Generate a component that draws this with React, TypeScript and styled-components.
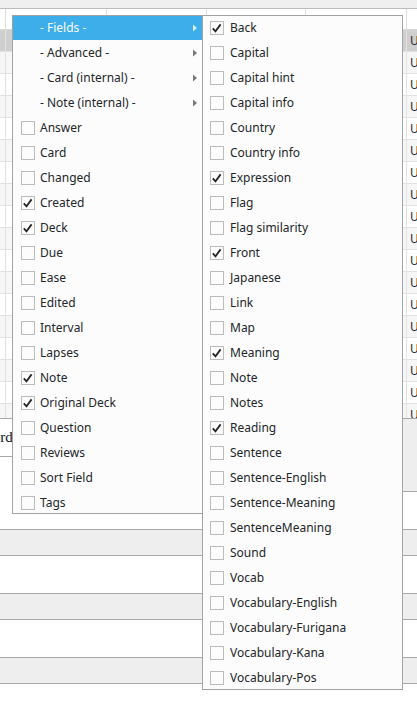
import React from "react";
import styled, { createGlobalStyle } from "styled-components";

const GlobalStyle = createGlobalStyle`
  html, body { margin: 0; padding: 0; background: #ffffff; }
  body {
    font-family: "Noto Sans", "Open Sans", sans-serif;
    font-size: 12px;
    color: #232629;
  }
  #root { width: 417px; height: 715px; }
`;

const Page = styled.div`
  position: relative;
  width: 417px;
  height: 715px;
  overflow: hidden;
  background: #ffffff;
`;

const TopStrip = styled.div`
  height: 8px;
  background: #efefef;
  border-bottom: 1px solid #bcbcbc;
`;

const Table = styled.div`
  height: 409px;
  overflow: hidden;
  display: flex;
  flex-direction: column;
`;

const HeaderRow = styled.div`
  display: flex;
  flex: none;
  height: 20px;
  border-bottom: 1px solid #d9d9d9;
  background: #ffffff;
`;

const HeaderCell = styled.div<{ $w: number }>`
  flex: none;
  width: ${(p) => p.$w}px;
  box-sizing: border-box;
  border-right: 1px solid #dddddd;
`;

const Row = styled.div<{ $tone: "sel" | "alt" | "base" }>`
  display: flex;
  flex: none;
  height: 21px;
  border-bottom: 1px solid #e2e2e2;
  background: ${(p) =>
    p.$tone === "sel" ? "#cfcfcf" : p.$tone === "alt" ? "#f6f6f6" : "#ffffff"};
`;

const Cell = styled.div<{ $w: number }>`
  flex: none;
  width: ${(p) => p.$w}px;
  box-sizing: border-box;
  border-right: 1px solid #e2e2e2;
  display: flex;
  align-items: center;
  padding-left: 3px;
  white-space: nowrap;
  overflow: hidden;
  color: #232629;
`;

const EditorTop = styled.div`
  display: flex;
  height: 73px;
  border-top: 1px solid #a8a8a8;
`;

const LeftPanel = styled.div`
  width: 60px;
  flex: none;
  background: #ffffff;
`;

const CardsLabel = styled.div`
  height: 37px;
  border-bottom: 1px solid #a8a8a8;
  display: flex;
  align-items: center;
  font-family: "Liberation Serif", "DejaVu Serif", serif;
  font-size: 15px;
  color: #111111;
  white-space: nowrap;
  overflow: hidden;
  text-indent: -16.5px;
`;

const ToolBar = styled.div`
  flex: 1;
  background: #eeeeee;
  border-bottom: 1px solid #a8a8a8;
`;

const FieldBand = styled.div<{ $label?: boolean }>`
  height: ${(p) => (p.$label ? 25 : 37)}px;
  background: ${(p) => (p.$label ? "#eeeeee" : "#ffffff")};
  border-bottom: 1px solid #a8a8a8;
`;

const Menu = styled.div<{ $left: number; $width: number; $height: number }>`
  position: absolute;
  top: 15px;
  left: ${(p) => p.$left}px;
  width: ${(p) => p.$width}px;
  height: ${(p) => p.$height}px;
  box-sizing: border-box;
  border: 1px solid #a3a3a3;
  background: #fcfcfc;
  overflow: hidden;
  display: flex;
  flex-direction: column;
`;

const Item = styled.div<{ $active?: boolean; $pad: number; $gap: number }>`
  flex: none;
  height: 25px;
  box-sizing: border-box;
  border-bottom: 1px solid transparent;
  background-clip: padding-box;
  display: flex;
  align-items: center;
  gap: ${(p) => p.$gap}px;
  padding-left: ${(p) => p.$pad}px;
  padding-right: 5px;
  background-color: ${(p) => (p.$active ? "#3daee9" : "transparent")};
  color: ${(p) => (p.$active ? "#fcfcfc" : "#232629")};
  white-space: nowrap;
`;

const Label = styled.span`
  flex: 1;
  line-height: 16px;
`;

const Spacer = styled.span`
  width: 14px;
  flex: none;
`;

const CheckBox = ({ checked }: { checked: boolean }) => (
  <svg width="14" height="14" viewBox="0 0 14 14" style={{ flex: "none" }}>
    <rect x="0.5" y="0.5" width="13" height="13" fill="#fcfcfc" stroke="#bcbcbc" />
    {checked && (
      <polyline
        points="2.8,7.3 5.5,10.3 10.6,3.4"
        fill="none"
        stroke="#232629"
        strokeWidth="1.8"
      />
    )}
  </svg>
);

const Arrow = ({ active }: { active?: boolean }) => (
  <svg width="4" height="8" viewBox="0 0 4 8" style={{ flex: "none" }}>
    <polygon points="0,0.5 4,4 0,7.5" fill={active ? "#d8effb" : "#7a7a7a"} />
  </svg>
);

const colWidths = [6, 101, 100, 99, 101, 120];

type MainEntry = { label: string; sub?: boolean; checked?: boolean; active?: boolean };

const mainItems: MainEntry[] = [
  { label: "- Fields -", sub: true, active: true },
  { label: "- Advanced -", sub: true },
  { label: "- Card (internal) -", sub: true },
  { label: "- Note (internal) -", sub: true },
  { label: "Answer" },
  { label: "Card" },
  { label: "Changed" },
  { label: "Created", checked: true },
  { label: "Deck", checked: true },
  { label: "Due" },
  { label: "Ease" },
  { label: "Edited" },
  { label: "Interval" },
  { label: "Lapses" },
  { label: "Note", checked: true },
  { label: "Original Deck", checked: true },
  { label: "Question" },
  { label: "Reviews" },
  { label: "Sort Field" },
  { label: "Tags" },
];

const fieldItems: { label: string; checked?: boolean }[] = [
  { label: "Back", checked: true },
  { label: "Capital" },
  { label: "Capital hint" },
  { label: "Capital info" },
  { label: "Country" },
  { label: "Country info" },
  { label: "Expression", checked: true },
  { label: "Flag" },
  { label: "Flag similarity" },
  { label: "Front", checked: true },
  { label: "Japanese" },
  { label: "Link" },
  { label: "Map" },
  { label: "Meaning", checked: true },
  { label: "Note" },
  { label: "Notes" },
  { label: "Reading", checked: true },
  { label: "Sentence" },
  { label: "Sentence-English" },
  { label: "Sentence-Meaning" },
  { label: "SentenceMeaning" },
  { label: "Sound" },
  { label: "Vocab" },
  { label: "Vocabulary-English" },
  { label: "Vocabulary-Furigana" },
  { label: "Vocabulary-Kana" },
  { label: "Vocabulary-Pos" },
];

export default function App() {
  const rows = Array.from({ length: 18 }, (_, i) => i);
  return (
    <Page>
      <GlobalStyle />
      <TopStrip />
      <Table>
        <HeaderRow>
          {colWidths.map((w, i) => (
            <HeaderCell key={i} $w={w} />
          ))}
        </HeaderRow>
        {rows.map((r) => (
          <Row key={r} $tone={r === 0 ? "sel" : r % 2 === 1 ? "alt" : "base"}>
            {colWidths.map((w, i) => (
              <Cell key={i} $w={w}>
                {i === colWidths.length - 1 ? "U" : ""}
              </Cell>
            ))}
          </Row>
        ))}
      </Table>
      <EditorTop>
        <LeftPanel>
          <CardsLabel>Cards:</CardsLabel>
        </LeftPanel>
        <ToolBar />
      </EditorTop>
      <FieldBand />
      <FieldBand $label />
      <FieldBand />
      <FieldBand $label />
      <FieldBand />
      <FieldBand $label />

      <Menu $left={12} $width={191} $height={499}>
        {mainItems.map((it) => (
          <Item key={it.label} $active={it.active} $pad={8} $gap={5}>
            {it.sub ? <Spacer /> : <CheckBox checked={!!it.checked} />}
            <Label>{it.label}</Label>
            {it.sub && <Arrow active={it.active} />}
          </Item>
        ))}
      </Menu>

      <Menu $left={202} $width={201} $height={675}>
        {fieldItems.map((it) => (
          <Item key={it.label} $pad={7} $gap={6}>
            <CheckBox checked={!!it.checked} />
            <Label>{it.label}</Label>
          </Item>
        ))}
      </Menu>
    </Page>
  );
}
